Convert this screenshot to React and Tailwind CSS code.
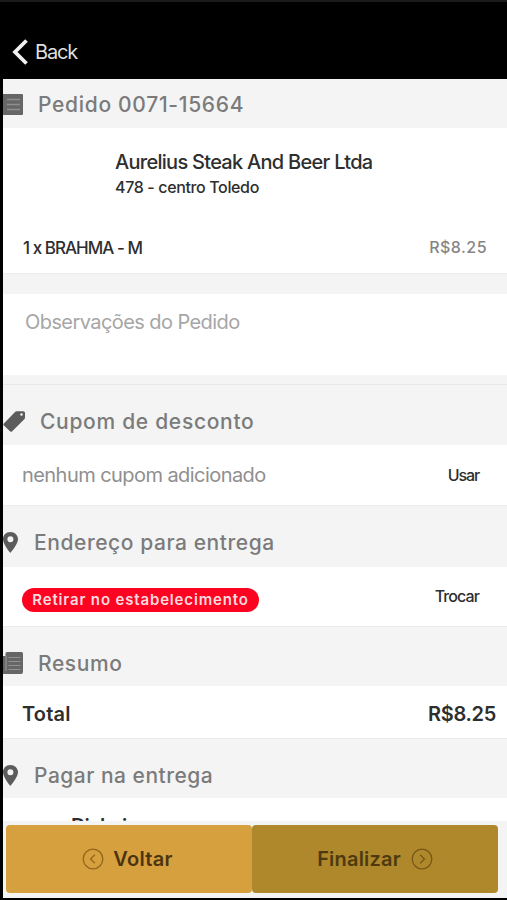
import { clsx } from 'clsx'

const ListIcon = () => (
  <svg viewBox="0 0 20 21" className="w-5 h-[21px] shrink-0">
    <path d="M0 0h19a1 1 0 0 1 1 1v19a1 1 0 0 1-1 1H0z" fill="#666" />
    <path d="M4 5.5h13M4 10.5h13M4 15.5h13" stroke="#8f8f8f" strokeWidth="1.3" />
  </svg>
)

const PaperIcon = () => (
  <svg viewBox="0 0 20 22" className="w-5 h-[22px] shrink-0">
    <path d="M0 4h2.5V1.5A1.5 1.5 0 0 1 4 0h14.5A1.5 1.5 0 0 1 20 1.5V20a2 2 0 0 1-2 2H0z" fill="#666" />
    <path d="M3 4v15M5.5 5.5h12M5.500 9.500h12M5.500 13.500h12M5.500 17.500h12" stroke="#929292" strokeWidth="1.2" fill="none" />
  </svg>
)

const TagIcon = () => (
  <svg viewBox="0 0 22 21" className="w-[22px] h-[21px] shrink-0">
    <path
      d="M13.500.2h6.700c1.100 0 1.800.7 1.800 1.800v4.500c0 .7-.2 1.200-.7 1.700L9.200 20.300c-.7.700-1.500.700-2.200 0L.900 14.600c-.7-.7-.7-1.500 0-2.200L12 .9c.4-.4.900-.7 1.500-.7zm5 2a1.300 1.300 0 1 0 0 2.600 1.300 1.300 0 0 0 0-2.600z"
      fill="#5c5c5c"
      fillRule="evenodd"
    />
  </svg>
)

const PinIcon = () => (
  <svg viewBox="0 0 15 21" className="w-[15px] h-[21px] shrink-0">
    <path
      d="M7.300 0C3 0 0 3.200 0 7.300 0 12.500 7.300 21 7.300 21S15 12.500 15 7.300C15 3.200 11.700 0 7.300 0zm.1 4.300a3 3 0 1 1 0 6 3 3 0 0 1 0-6z"
      fill="#5c5c5c"
      fillRule="evenodd"
    />
  </svg>
)

const CircleArrow = ({ right }) => (
  <svg viewBox="0 0 22 22" className={clsx('w-[22px] h-[22px]', right && 'rotate-180')} fill="none" stroke="currentColor" strokeWidth="1.3">
    <circle cx="11" cy="11" r="9.800" />
    <path d="M12.800 6.800 8.600 11l4.200 4.200" />
  </svg>
)

const SectionTitle = ({ icon, className, children }) => (
  <div className={clsx('flex items-center bg-[#f4f4f4] text-[21px] leading-none font-medium text-[#7b7b7b]', className)}>
    {icon}
    {children}
  </div>
)

export default function App() {
  return (
    <div className="w-[507px] h-[900px] overflow-hidden flex flex-col bg-black font-['Inter','Open_Sans',sans-serif] whitespace-nowrap">
      {/* Top bar */}
      <header className="h-[79px] shrink-0 border-t-2 border-[#1b1b1b] flex items-center gap-[7px] pl-3 pt-[22px] text-[#dedede]">
        <svg viewBox="0 0 16 26" className="w-4 h-[26px]" fill="none" stroke="#f0f0f0" strokeWidth="3.800">
          <path d="M14.500 1.500 3 13l11.500 11.500" />
        </svg>
        <span className="text-[20px] leading-none tracking-[-1.200px]">Back</span>
      </header>

      <main className="ml-[3px] flex-1 min-h-0 flex flex-col bg-white text-[#2e2e2e] overflow-hidden">
        <SectionTitle icon={<ListIcon />} className="h-[49px] shrink-0 gap-[15px] pt-px">
          <span className="tracking-[0.700px]">Pedido 0071-15664</span>
        </SectionTitle>

        {/* Store and items */}
        <section className="h-[145px] shrink-0 flex flex-col">
          <div className="pl-[112px] pt-[24px] flex flex-col gap-[7px]">
            <h1 className="text-[20px] leading-[20px] font-medium tracking-[-0.720px]">Aurelius Steak And Beer Ltda</h1>
            <p className="text-[16px] leading-[16px] font-medium tracking-[-0.360px]">478 - centro Toledo</p>
          </div>
          <div className="mt-[43px] pl-5 pr-5 flex justify-between leading-[20px]">
            <span className="text-[17px] font-medium tracking-[-0.960px]">1 x BRAHMA - M</span>
            <span className="-mt-px text-[16px] font-medium tracking-[0.450px] text-[#858585]">R$8.25</span>
          </div>
        </section>

        <div className="h-[21px] shrink-0 bg-[#f4f4f4] border-t border-[#ececec]" />

        <div className="h-[81px] shrink-0 pl-[22px] pt-[18px] text-[20px] leading-[20px] text-[#a6a6a6]">
          <span className="tracking-[-0.580px]">Observações do Pedido</span>
        </div>

        <div className="h-[10px] shrink-0 bg-[#f4f4f4] border-b border-[#e8e8e8]" />
        <SectionTitle icon={<TagIcon />} className="h-[60px] shrink-0 gap-[15px] pt-[13px]">
          <span className="tracking-[0.700px]">Cupom de desconto</span>
        </SectionTitle>
        <div className="h-[60px] shrink-0 flex items-center justify-between pl-[19px] pr-7">
          <span className="text-[20px] tracking-[-0.560px] text-[#8f8f8f]">nenhum cupom adicionado</span>
          <span className="text-[16px] font-medium tracking-[-1.100px]">Usar</span>
        </div>

        <SectionTitle icon={<PinIcon />} className="h-[62px] shrink-0 gap-4 pt-[11px] border-t border-[#ececec]">
          <span className="tracking-[0.570px]">Endereço para entrega</span>
        </SectionTitle>
        <div className="h-[59px] shrink-0 flex items-center justify-between pl-[19px] pr-7">
          <span className="mt-[6px] h-6 w-[237px] rounded-full bg-[#fb0321] text-[#ffd9de] text-[15px] leading-6 font-semibold text-center tracking-[0.840px]">
            Retirar no estabelecimento
          </span>
          <span className="-mt-px text-[16px] font-medium tracking-[-0.900px]">Trocar</span>
        </div>

        <SectionTitle icon={<PaperIcon />} className="h-[60px] shrink-0 gap-[15px] pt-[13px] border-t border-[#ececec]">
          <span className="tracking-[0.600px]">Resumo</span>
        </SectionTitle>
        <div className="h-[52px] shrink-0 flex items-center justify-between pl-[19px] pr-[11px] pt-[3px] text-[20px] leading-none font-semibold">
          <span className="tracking-[0.200px]">Total</span>
          <span className="tracking-[-0.300px]">R$8.25</span>
        </div>

        <SectionTitle icon={<PinIcon />} className="h-[60px] shrink-0 gap-4 pt-[13px] border-t border-[#ececec]">
          <span className="tracking-[0.500px]">Pagar na entrega</span>
        </SectionTitle>
        {/* Payment option scrolled under the footer */}
        <div className="h-[23px] shrink-0 overflow-hidden pl-[68px] pt-[18px] text-[20px] leading-[20px] font-semibold tracking-[-1px]">Dinheiro</div>

        <footer className="h-[77px] shrink-0 flex bg-[#f4f4f4] pl-[3px] pt-1 pr-[9px] pb-[5px] text-[20px] font-semibold">
          <button className="w-[246px] rounded-[4px] bg-[#d7a03e] flex items-center justify-center gap-[9px] pr-[3px] text-[#4b3510]">
            <span className="text-[#93651d]"><CircleArrow /></span>
            <span className="tracking-[0.300px]">Voltar</span>
          </button>
          <button className="flex-1 rounded-[4px] bg-[#af882b] flex items-center justify-center gap-[10px] text-[#4e3a10]">
            <span className="tracking-[0.200px]">Finalizar</span>
            <span className="text-[#785718]"><CircleArrow right /></span>
          </button>
        </footer>
      </main>
      <div className="h-[2px] shrink-0 bg-black" />
    </div>
  )
}
